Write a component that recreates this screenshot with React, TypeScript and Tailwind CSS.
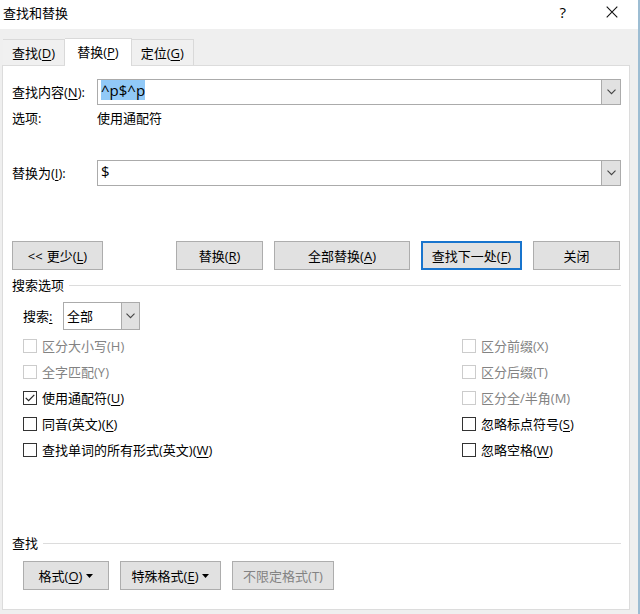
import React, { useEffect, useRef, useState } from 'react'
import clsx from 'clsx'

type Item = {
    text: string
    hotkey: string
    checked?: boolean
    disabled?: boolean
}

const TABS: Item[] = [
    { text: '查找', hotkey: 'D' },
    { text: '替换', hotkey: 'P' },
    { text: '定位', hotkey: 'G' }
]

const LEFT_OPTIONS: Item[] = [
    { text: '区分大小写', hotkey: 'H', disabled: true },
    { text: '全字匹配', hotkey: 'Y', disabled: true },
    { text: '使用通配符', hotkey: 'U', checked: true },
    { text: '同音(英文)', hotkey: 'K' },
    { text: '查找单词的所有形式(英文)', hotkey: 'W' }
]

const RIGHT_OPTIONS: Item[] = [
    { text: '区分前缀', hotkey: 'X', disabled: true },
    { text: '区分后缀', hotkey: 'T', disabled: true },
    { text: '区分全/半角', hotkey: 'M', disabled: true },
    { text: '忽略标点符号', hotkey: 'S' },
    { text: '忽略空格', hotkey: 'W' }
]

function Caption({ text, hotkey, plain }: { text: string, hotkey: string, plain?: boolean }) {
    return (
        <span className="whitespace-nowrap">
            {text}({plain ? hotkey : <u className="underline-offset-2">{hotkey}</u>})
        </span>
    )
}

function Chevron() {
    return (
        <svg width="9" height="6" viewBox="0 0 9 6" fill="none" stroke="#444" strokeWidth="1.1">
            <path d="M0.5 0.7 L4.5 4.7 L8.5 0.7" />
        </svg>
    )
}

function PushButton({ className, primary, disabled, children }: { className?: string, primary?: boolean, disabled?: boolean, children: React.ReactNode }) {
    return (
        <button
            type="button"
            disabled={disabled}
            className={clsx(
                'flex h-[29px] items-center justify-center bg-[#e1e1e1] whitespace-nowrap',
                primary ? 'border-2 border-[#1874cd]' : 'border border-[#adadad]',
                disabled && 'text-[#838383]',
                className
            )}
        >
            {children}
        </button>
    )
}

function ComboRow({ id, text, hotkey, initial, focused }: { id: string, text: string, hotkey: string, initial: string, focused?: boolean }) {
    const [value, setValue] = useState(initial)
    const ref = useRef<HTMLInputElement>(null)

    useEffect(() => {
        if (focused) {
            ref.current?.focus()
            ref.current?.select()
        }
    }, [focused])

    return (
        <div className="flex h-[26px] items-center">
            <label htmlFor={id} className="w-[85px] shrink-0">
                <Caption text={text} hotkey={hotkey} />:
            </label>
            <div className="flex h-full min-w-0 flex-1 border border-[#ababab] bg-white">
                <input
                    id={id}
                    ref={ref}
                    type="text"
                    autoComplete="off"
                    value={value}
                    onChange={(e) => setValue(e.target.value)}
                    className="h-5 min-w-0 flex-1 px-[3px] text-[15px] leading-5 outline-none selection:bg-[#91c9f7] selection:text-black"
                />
                <button type="button" aria-label="展开" className="-my-px -mr-px flex w-5 items-center justify-center border border-[#ababab] bg-[#e1e1e1]">
                    <Chevron />
                </button>
            </div>
        </div>
    )
}

function Option({ item }: { item: Item }) {
    return (
        <label className={clsx('flex h-[26px] items-center gap-[5px]', item.disabled && 'text-[#838383]')}>
            <span className="grid size-[14px] shrink-0 place-items-center">
                <input
                    type="checkbox"
                    defaultChecked={item.checked}
                    disabled={item.disabled}
                    className="peer col-start-1 row-start-1 size-[14px] appearance-none border border-[#333] bg-white disabled:border-[#cccccc]"
                />
                <svg className="pointer-events-none invisible col-start-1 row-start-1 peer-checked:visible" width="10" height="8" viewBox="0 0 10 8" fill="none" stroke="#222" strokeWidth="1.2">
                    <path d="M0.7 3.8 L3.6 6.7 L9.3 0.9" />
                </svg>
            </span>
            <Caption text={item.text} hotkey={item.hotkey} plain={item.disabled} />
        </label>
    )
}

function SectionTitle({ children }: { children: React.ReactNode }) {
    return (
        <div className="flex h-5 items-center gap-[5px]">
            <h2>{children}</h2>
            <div className="h-px flex-1 bg-[#dcdcdc]" />
        </div>
    )
}

function App() {
    const [tab, setTab] = useState(1)

    return (
        <div className="flex min-h-screen flex-col border-r-2 border-[#9dbdd3] bg-[#efefef] font-['Open_Sans','Noto_Sans_CJK_SC',sans-serif] text-[13px] leading-5 text-black">
            <header className="flex h-[29px] items-center bg-white pr-5 pl-[3px]">
                <h1 className="flex-1 pb-1">查找和替换</h1>
                <button type="button" aria-label="帮助" className="mr-10 pb-[5px] text-[15px]">?</button>
                <button type="button" aria-label="关闭窗口" className="pb-[5px]">
                    <svg width="12" height="12" viewBox="0 0 12 12" stroke="#111" strokeWidth="1.1">
                        <path d="M0.7 0.7 L11.3 11.3 M11.3 0.7 L0.7 11.3" />
                    </svg>
                </button>
            </header>

            <div role="tablist" className="z-10 -mb-px flex items-end pt-[9px] pl-[3px]">
                {TABS.map((t, i) => (
                    <button
                        key={t.hotkey}
                        type="button"
                        role="tab"
                        aria-selected={i == tab}
                        onClick={() => setTab(i)}
                        className={clsx(
                            'border-t border-r border-[#d9d9d9]',
                            i == tab ? 'h-7 bg-white px-3 pb-px' : 'mb-px h-[26px] bg-[#f0f0f0] px-[9px]'
                        )}
                    >
                        <Caption text={t.text} hotkey={t.hotkey} />
                    </button>
                ))}
            </div>

            <main className="mr-[8px] mb-1 ml-[2px] flex-1 border border-[#dcdcdc] bg-white pt-[13px] pr-[8px] pl-[9px]">
                <ComboRow id="find" text="查找内容" hotkey="N" initial="^p$^p" focused />
                <div className="flex h-[26px] items-center">
                    <span className="w-[85px]">选项:</span>
                    <span>使用通配符</span>
                </div>
                <div className="mt-[29px]">
                    <ComboRow id="replace" text="替换为" hotkey="I" initial="$" />
                </div>

                <div className="mt-[55px] flex gap-[11px] pr-px">
                    <PushButton className="mr-auto w-[91px] gap-1"><span>&lt;&lt;</span><Caption text="更少" hotkey="L" /></PushButton>
                    <PushButton className="w-[87px]"><Caption text="替换" hotkey="R" /></PushButton>
                    <PushButton className="w-[136px]"><Caption text="全部替换" hotkey="A" /></PushButton>
                    <PushButton className="w-[101px]" primary><Caption text="查找下一处" hotkey="F" /></PushButton>
                    <PushButton className="w-[87px]">关闭</PushButton>
                </div>

                <section className="mt-[5px]">
                    <SectionTitle>搜索选项</SectionTitle>
                    <div className="mt-[7px] flex h-7 items-center pl-[11px]">
                        <label htmlFor="direction" className="w-10">搜索<u className="underline-offset-2">:</u></label>
                        <div className="relative h-full w-[77px]">
                            <select id="direction" className="h-full w-full appearance-none border border-[#ababab] bg-white pl-[3px]">
                                <option>全部</option>
                                <option>向上</option>
                                <option>向下</option>
                            </select>
                            <span className="pointer-events-none absolute inset-y-0 right-0 flex w-[19px] items-center justify-center border border-[#ababab] bg-[#e1e1e1]">
                                <Chevron />
                            </span>
                        </div>
                    </div>
                    <div className="mt-[3px] flex justify-between pl-[11px]">
                        <div>
                            {LEFT_OPTIONS.map((o) => <Option key={o.text} item={o} />)}
                        </div>
                        <div className="w-[159px]">
                            {RIGHT_OPTIONS.map((o) => <Option key={o.text} item={o} />)}
                        </div>
                    </div>
                </section>

                <section className="mt-[70px]">
                    <SectionTitle>查找</SectionTitle>
                    <div className="mt-2 flex gap-[11px] pl-[11px]">
                        <PushButton className="w-[86px] gap-1">
                            <Caption text="格式" hotkey="O" />
                            <svg width="7" height="4" viewBox="0 0 7 4"><path d="M0 0 H7 L3.5 4 Z" /></svg>
                        </PushButton>
                        <PushButton className="w-[101px] gap-1">
                            <Caption text="特殊格式" hotkey="E" />
                            <svg width="7" height="4" viewBox="0 0 7 4"><path d="M0 0 H7 L3.5 4 Z" /></svg>
                        </PushButton>
                        <PushButton className="w-[102px]" disabled>
                            <Caption text="不限定格式" hotkey="T" plain />
                        </PushButton>
                    </div>
                </section>
            </main>
        </div>
    )
}

export default App
